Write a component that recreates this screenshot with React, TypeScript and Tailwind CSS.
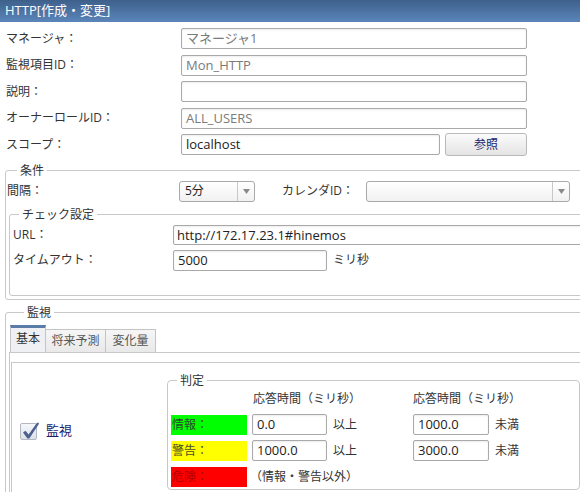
import React from 'react';

const inputCls =
  'h-[21px] border border-[#a9a9a9] rounded-[2px] bg-white px-[4px] text-[13px] leading-[19px] shadow-[inset_0_1px_2px_rgba(0,0,0,0.08)] whitespace-nowrap overflow-hidden';

function TextBox({ value, className, disabled }: { value: string; className: string; disabled?: boolean }) {
  return (
    <div className={`${inputCls} ${className} ${disabled ? 'text-[#7a7a7a]' : 'text-[#222]'}`}>{value}</div>
  );
}

function Select({ value, className }: { value: string; className: string }) {
  return (
    <div
      className={`h-[21px] flex border border-[#a9a9a9] rounded-[3px] bg-gradient-to-b from-white to-[#f1f1f1] text-[12px] text-[#222] ${className}`}
    >
      <div className="flex-1 flex items-center pl-[5px]">{value}</div>
      <div className="w-[17px] border-l border-[#c8c8c8] flex items-center justify-center">
        <svg width="7" height="5" viewBox="0 0 7 5">
          <path d="M0 0 L7 0 L3.5 5 Z" fill="#8a8a8a" />
        </svg>
      </div>
    </div>
  );
}

const rows = [
  { label: 'マネージャ：', value: 'マネージャ1', disabled: true },
  { label: '監視項目ID：', value: 'Mon_HTTP', disabled: true },
  { label: '説明：', value: '', disabled: false },
  { label: 'オーナーロールID：', value: 'ALL_USERS', disabled: true },
];

export default function App() {
  return (
    <div className="w-[580px] h-[492px] overflow-hidden bg-white text-[12px] text-[#333] font-[family-name:'Open_Sans','Noto_Sans_CJK_JP',sans-serif]">
      {/* title */}
      <div className="h-[22px] flex items-center pl-[5px] bg-gradient-to-b from-[#3e608b] to-[#5b86ba] text-white text-[13px]">
        HTTP[作成・変更]
      </div>

      {/* basic fields */}
      <div className="flex flex-col pt-[6px] gap-[5.5px]">
        {rows.map((r) => (
          <div key={r.label} className="flex items-center h-[21px]">
            <div className="w-[181px] pl-[6px]">{r.label}</div>
            <TextBox value={r.value} disabled={r.disabled} className="w-[346px]" />
          </div>
        ))}
        <div className="flex items-center h-[21px]">
          <div className="w-[181px] pl-[6px]">スコープ：</div>
          <TextBox value="localhost" className="w-[259px]" />
          <button className="ml-[5px] w-[82px] h-[23px] border border-[#b9b9b9] rounded-[3px] bg-gradient-to-b from-[#fbfbfb] to-[#e4e4e4] text-[12px] text-[#1c1c6a]">
            参照
          </button>
        </div>
      </div>

      {/* 条件 */}
      <fieldset className="mt-[7.5px] ml-[5px] w-[600px] border border-[#c8c8c8] rounded-[3px]">
        <legend className="ml-[11px] px-[3px] leading-[16px]">条件</legend>
        <div className="mt-[2px] flex items-center h-[21px]">
          <div className="w-[173px] pl-[1px]">間隔：</div>
          <Select value="5分" className="w-[76px]" />
          <div className="ml-[27px] w-[84px]">カレンダID：</div>
          <Select value="" className="w-[204px]" />
        </div>

        <fieldset className="mt-[5px] mb-[3px] ml-[3px] w-[590px] border border-[#c8c8c8] rounded-[3px] pb-[24px]">
          <legend className="ml-[9px] px-[3px] leading-[16px]">チェック設定</legend>
          <div className="mt-[2px] flex items-center h-[20px]">
            <div className="w-[163px] pl-[3px]">URL：</div>
            <div className="h-[20px] w-[420px] border border-[#a9a9a9] rounded-[2px] px-[3px] text-[13px] leading-[18px] text-[#222] shadow-[inset_0_1px_2px_rgba(0,0,0,0.08)]">
              http://172.17.23.1#hinemos
            </div>
          </div>
          <div className="mt-[5px] flex items-center h-[21px]">
            <div className="w-[163px] pl-[3px]">タイムアウト：</div>
            <TextBox value="5000" className="w-[154px]" />
            <div className="ml-[6px]">ミリ秒</div>
          </div>
        </fieldset>
      </fieldset>

      {/* 監視 */}
      <fieldset className="mt-[5px] ml-[5px] w-[600px] h-[200px] border border-[#c8c8c8] rounded-[3px]">
        <legend className="ml-[18px] px-[3px] leading-[16px]">監視</legend>
        <div className="mt-[4px] ml-[3px]">
          <div className="flex items-end h-[27px] pl-[1px]">
            <div className="w-[36px] h-[27px] border-t-[3px] border-t-[#5a7ca6] border-x border-x-[#c4c4c4] bg-[#eef0f3] flex items-center justify-center pb-[1px]">
              基本
            </div>
            <div className="w-[60px] h-[23px] border-t border-r border-[#c4c4c4] bg-gradient-to-b from-[#f6f6f6] to-[#e9e9e9] flex items-center justify-center text-[#555]">
              将来予測
            </div>
            <div className="w-[50px] h-[23px] border-t border-r border-[#c4c4c4] bg-gradient-to-b from-[#f6f6f6] to-[#e9e9e9] flex items-center justify-center text-[#555]">
              変化量
            </div>
          </div>
          <div className="border-t border-l border-[#c8c8c8] pt-[9px] h-[200px]">
            <div className="ml-[1px] border-t border-l border-[#c8c8c8] pt-[10px] flex h-[200px] items-start">
              <div className="w-[155px] h-[117px] pl-[8px] flex items-center">
                <div className="relative w-[17px] h-[17px] border border-[#b4b8c2] rounded-[2px] bg-gradient-to-b from-[#f5f7fa] to-[#dce2ea]">
                  <svg
                    className="absolute left-0 top-0 overflow-visible"
                    width="17"
                    height="17"
                    viewBox="0 0 17 17"
                  >
                    <path d="M2 8.5 L4.5 6.8 L7.6 10.6 L16.2 -1.6 L18.2 -0.4 L8.3 14.6 L6.4 14.6 Z" fill="#4c5f8e" />
                  </svg>
                </div>
                <div className="ml-[9px] text-[#1c1c6a] text-[13px]">監視</div>
              </div>

              <fieldset className="w-[413px] h-[117px] border border-[#c8c8c8] rounded-[4px]">
                <legend className="ml-[9px] px-[3px] leading-[16px]">判定</legend>
                <div className="flex h-[18px] items-center mt-[1px]">
                  <div className="ml-[85px] w-[160px]">応答時間（ミリ秒）</div>
                  <div>応答時間（ミリ秒）</div>
                </div>
                <div className="mt-[7px] flex flex-col gap-[6px]">
                  <div className="flex items-center h-[20px]">
                    <div className="ml-[3px] w-[76px] h-[20px] bg-[#00ff00] text-[#2d4a2d] flex items-center pl-[1px]">情報：</div>
                    <TextBox value="0.0" className="ml-[5px] w-[75px]" />
                    <div className="ml-[6px] w-[80px]">以上</div>
                    <TextBox value="1000.0" className="w-[76px]" />
                    <div className="ml-[6px]">未満</div>
                  </div>
                  <div className="flex items-center h-[20px]">
                    <div className="ml-[3px] w-[76px] h-[20px] bg-[#ffff00] text-[#4a4a2a] flex items-center pl-[1px]">警告：</div>
                    <TextBox value="1000.0" className="ml-[5px] w-[75px]" />
                    <div className="ml-[6px] w-[80px]">以上</div>
                    <TextBox value="3000.0" className="w-[76px]" />
                    <div className="ml-[6px]">未満</div>
                  </div>
                  <div className="flex items-center h-[20px]">
                    <div className="ml-[3px] w-[76px] h-[20px] bg-[#ff0000] text-[#b00000] flex items-center pl-[1px]">危険：</div>
                    <div className="ml-[3px]">（情報・警告以外）</div>
                  </div>
                </div>
              </fieldset>
            </div>
          </div>
        </div>
      </fieldset>
    </div>
  );
}
